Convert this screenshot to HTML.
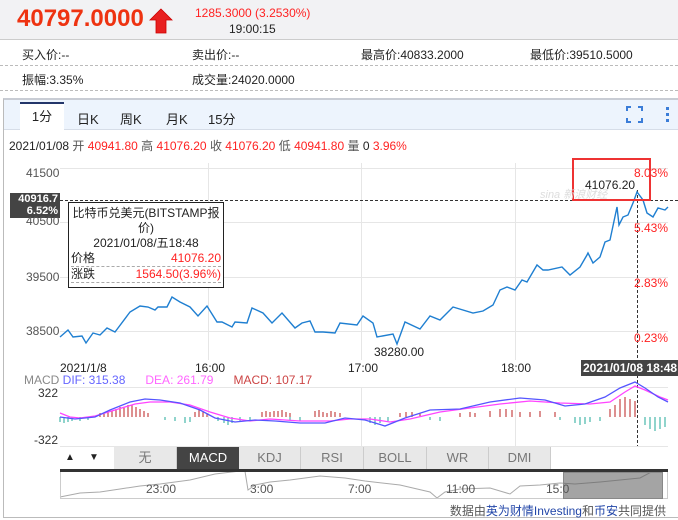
<!DOCTYPE html><html><head><meta charset="utf-8"><style>
*{margin:0;padding:0;box-sizing:border-box}
body{width:678px;height:520px;background:#fff;font-family:"Liberation Sans","Noto Sans CJK SC",sans-serif;font-size:12px;color:#222;position:relative;overflow:hidden}
.a{position:absolute;white-space:nowrap}
.r{color:#f22}
</style></head><body>
<div class="a" style="left:0;top:0;width:678px;height:40px;background:#f2f2f4;border-bottom:1px solid #ccc"></div>
<div class="a" style="left:17px;top:5px;font-size:24px;font-weight:bold;color:#e31;">40797.0000</div>
<svg class="a" style="left:149px;top:8px" width="24" height="26"><polygon points="12,1 23,12 17,12 17,25 7,25 7,12 1,12" fill="#e82020" stroke="#c00" stroke-width="0.8"/></svg>
<div class="a r" style="left:195px;top:6px;font-size:12px">1285.3000 (3.2530%)</div>
<div class="a" style="left:229px;top:22px;font-size:12px">19:00:15</div>
<div class="a" style="left:22px;top:46px">买入价:--</div>
<div class="a" style="left:192px;top:46px">卖出价:--</div>
<div class="a" style="left:361px;top:46px">最高价:40833.2000</div>
<div class="a" style="left:530px;top:46px">最低价:39510.5000</div>
<div class="a" style="left:0;top:65px;width:678px;border-top:1px dashed #bbb"></div>
<div class="a" style="left:22px;top:71px">振幅:3.35%</div>
<div class="a" style="left:192px;top:71px">成交量:24020.0000</div>
<div class="a" style="left:0;top:90px;width:678px;border-top:1px dashed #bbb"></div>
<div class="a" style="left:3px;top:98px;width:680px;height:420px;border:1px solid #bbb;border-top:2px solid #c8ccd4"></div>
<div class="a" style="left:4px;top:100px;width:678px;height:30px;background:#edf4fd;border-bottom:1px solid #d6dde8"></div>
<div class="a" style="left:20px;top:102px;width:44px;height:29px;background:#fff;border-top:2px solid #23366a;text-align:center;line-height:26px;font-size:13px">1分</div>
<div class="a" style="left:77px;top:109px;font-size:13px">日K</div>
<div class="a" style="left:120px;top:109px;font-size:13px">周K</div>
<div class="a" style="left:166px;top:109px;font-size:13px">月K</div>
<div class="a" style="left:208px;top:109px;font-size:13px">15分</div>
<svg class="a" style="left:626px;top:106px" width="50" height="18"><path d="M1 5V1h4M12 1h4v4M16 12v4h-4M5 16H1v-4" stroke="#3b7dd8" stroke-width="2" fill="none"/><rect x="40" y="1" width="3" height="3" fill="#3b7dd8"/><rect x="40" y="7" width="3" height="3" fill="#3b7dd8"/><rect x="40" y="13" width="3" height="3" fill="#3b7dd8"/></svg>
<div class="a" style="left:9px;top:137px">2021/01/08 <span style="color:#555">开</span> <span class="r">40941.80</span> <span style="color:#555">高</span> <span class="r">41076.20</span> <span style="color:#555">收</span> <span class="r">41076.20</span> <span style="color:#555">低</span> <span class="r">40941.80</span> <span style="color:#555">量</span> 0 <span class="r">3.96%</span></div>
<svg class="a" style="left:0;top:0" width="678" height="520">
<g stroke="#e6e6e6" stroke-width="1">
<line x1="60" y1="168.5" x2="668" y2="168.5"/><line x1="60" y1="222.5" x2="668" y2="222.5"/><line x1="60" y1="277.5" x2="668" y2="277.5"/><line x1="60" y1="331.5" x2="668" y2="331.5"/>
<line x1="208.5" y1="163" x2="208.5" y2="360"/><line x1="361.5" y1="163" x2="361.5" y2="360"/><line x1="515.5" y1="163" x2="515.5" y2="360"/>
<line x1="60" y1="387.5" x2="668" y2="387.5"/><line x1="60" y1="446.5" x2="668" y2="446.5"/>
<line x1="208.5" y1="387" x2="208.5" y2="446"/><line x1="361.5" y1="387" x2="361.5" y2="446"/><line x1="515.5" y1="387" x2="515.5" y2="446"/>
</g>
<line x1="60" y1="200.5" x2="678" y2="200.5" stroke="#333" stroke-dasharray="3,2"/>
<line x1="637.5" y1="190" x2="637.5" y2="446" stroke="#333" stroke-dasharray="3,2"/>
<polyline fill="none" stroke="#1f7fd1" stroke-width="1.4" points="60,337 68,330 73,337 82,336 86,343 93,333 100,335 107,328 115,332 130,312 140,306 148,307 155,310 158,307 167,307 172,297 180,302 190,307 198,316 207,306 217,322 222,322 232,327 235,322 247,323 252,308 263,313 272,323 282,313 295,328 302,323 310,321 315,332 323,332 335,333 340,323 357,325 363,316 373,323 377,337 393,334 397,344 405,322 420,329 430,316 440,320 453,307 473,313 483,311 493,305 500,290 507,287 515,290 522,280 527,282 537,265 543,270 548,270 562,267 570,275 580,267 587,255 588,253 593,263 600,257 605,242 610,240 617,207 619,225 623,217 628,215 633,203 637,192 643,200 647,213 653,217 658,208 665,210 668,207"/>
<g stroke="#b22" stroke-width="1"><path d="M100 417v-4M104 417v-4M108 417v-5M112 417v-6M116 417v-8M120 417v-10M124 417v-10M128 417v-12M132 417v-12M136 417v-10M140 417v-8M144 417v-6M148 417v-4M195 417v-5M199 417v-8M203 417v-6M207 417v-4M262 417v-5M266 417v-6M270 417v-5M274 417v-6M278 417v-6M282 417v-7M286 417v-5M290 417v-4M315 417v-6M319 417v-7M323 417v-5M327 417v-4M331 417v-6M335 417v-5M340 417v-4M400 417v-4M406 417v-5M412 417v-5M420 417v-4M460 417v-4M470 417v-5M475 417v-4M490 417v-6M500 417v-8M506 417v-8M512 417v-7M520 417v-5M530 417v-5M540 417v-6M555 417v-5M610 417v-8M615 417v-12M620 417v-18M625 417v-20M630 417v-18M635 417v-16"/></g>
<g stroke="#2a9" stroke-width="1"><path d="M60 417v5M64 417v6M68 417v5M72 417v4M80 417v4M88 417v3M165 417v3M175 417v4M185 417v6M190 417v5M218 417v4M224 417v6M228 417v8M232 417v6M240 417v4M250 417v3M290 417v3M300 417v4M370 417v6M375 417v8M380 417v6M388 417v4M430 417v3M440 417v4M560 417v3M575 417v6M580 417v8M585 417v7M590 417v5M600 417v4M645 417v8M650 417v12M655 417v14M660 417v12M665 417v10"/></g>
<polyline fill="none" stroke="#f4f" stroke-width="1.3" points="60,413 70,417 80,418 95,416 115,410 135,404 150,402 170,402 190,405 210,412 230,418 250,421 270,419 300,421 330,421 350,419 370,419 390,422 410,419 440,412 470,408 500,404 530,401 560,403 590,404 610,402 625,392 635,386 645,390 660,397 668,400"/>
<polyline fill="none" stroke="#55f" stroke-width="1.3" points="60,417 75,419 95,417 110,410 130,402 145,399 160,400 180,403 200,410 215,418 235,422 255,420 275,421 300,423 325,423 345,418 365,420 385,426 405,418 430,410 460,409 490,402 520,398 545,400 565,406 585,404 605,397 620,388 635,382 645,388 658,397 668,402"/>
<polyline fill="none" stroke="#aaa" stroke-width="1" points="60,497 80,493 100,492 120,489 140,486 160,484 190,480 215,474 240,471 244,465 248,490 255,485 270,482 290,480 320,476 345,478 365,481 400,485 430,492 437,498 445,492 460,489 490,488 510,494 520,486 540,485 560,483 575,484 600,482 620,480 640,478 655,470 660,472"/>
</svg>
<div class="a" style="left:10px;top:193px;width:50px;height:25px;background:#444;color:#fff;font-size:11px;font-weight:bold;text-align:right;line-height:12px;padding-right:2px">40916.7<br>6.52%</div>
<div class="a" style="left:26px;top:166px;color:#555">41500</div>
<div class="a" style="left:26px;top:214px;color:#555">40500</div>
<div class="a" style="left:26px;top:270px;color:#555">39500</div>
<div class="a" style="left:26px;top:324px;color:#555">38500</div>
<div class="a r" style="left:634px;top:166px">8.03%</div>
<div class="a r" style="left:634px;top:221px">5.43%</div>
<div class="a r" style="left:634px;top:276px">2.83%</div>
<div class="a r" style="left:634px;top:331px">0.23%</div>
<div class="a" style="left:68px;top:202px;width:156px;height:86px;background:#fff;border:1px solid #222;font-size:12px;line-height:15px">
<div style="text-align:center;padding-top:3px">比特币兑美元(BITSTAMP报<br>价)<br>2021/01/08/五18:48</div>
<div style="margin:0 2px;border-bottom:1px dashed #aaa;display:flex;justify-content:space-between"><span>价格</span><span class="r">41076.20</span></div>
<div style="margin:0 2px;border-bottom:1px dashed #aaa;display:flex;justify-content:space-between"><span>涨跌</span><span class="r">1564.50(3.96%)</span></div>
</div>
<div class="a" style="left:572px;top:158px;width:79px;height:43px;border:2px solid #e33"></div>
<div class="a" style="left:585px;top:178px">41076.20</div>
<div class="a" style="left:540px;top:186px;color:#ddd;font-size:11px;font-style:italic">sina 新浪财经</div>
<div class="a" style="left:374px;top:345px">38280.00</div>
<div class="a" style="left:60px;top:361px">2021/1/8</div>
<div class="a" style="left:195px;top:361px">16:00</div>
<div class="a" style="left:348px;top:361px">17:00</div>
<div class="a" style="left:501px;top:361px">18:00</div>
<div class="a" style="left:581px;top:360px;width:97px;height:16px;background:#444;color:#fff;font-weight:bold;line-height:16px;padding-left:2px">2021/01/08 18:48</div>
<div class="a" style="left:24px;top:373px;color:#888">MACD <span style="color:#66f">DIF: 315.38</span>&nbsp;&nbsp;&nbsp;&nbsp;&nbsp; <span style="color:#f6f">DEA: 261.79</span>&nbsp;&nbsp;&nbsp;&nbsp;&nbsp; <span style="color:#c44">MACD: 107.17</span></div>
<div class="a" style="left:38px;top:386px;color:#333">322</div>
<div class="a" style="left:34px;top:433px;color:#333">-322</div>
<div class="a" style="left:60px;top:447px;width:20px;height:22px;text-align:center;line-height:22px;font-size:10px">▲</div>
<div class="a" style="left:84px;top:447px;width:20px;height:22px;text-align:center;line-height:22px;font-size:10px">▼</div>
<div class="a" style="left:114px;top:447px;display:flex;height:22px;background:#e8e8e8;font-size:13px;color:#777">
<div style="width:63px;text-align:center;line-height:22px;border-right:1px solid #ccc">无</div>
<div style="width:62px;text-align:center;line-height:22px;background:#444;color:#fff">MACD</div>
<div style="width:62px;text-align:center;line-height:22px;border-right:1px solid #ccc">KDJ</div>
<div style="width:63px;text-align:center;line-height:22px;border-right:1px solid #ccc">RSI</div>
<div style="width:63px;text-align:center;line-height:22px;border-right:1px solid #ccc">BOLL</div>
<div style="width:62px;text-align:center;line-height:22px;border-right:1px solid #ccc">WR</div>
<div style="width:62px;text-align:center;line-height:22px;border-right:1px solid #ccc">DMI</div>
</div>
<div class="a" style="left:60px;top:469px;width:608px;height:3px;background:#333"></div>
<div class="a" style="left:60px;top:472px;width:608px;height:27px;border:1px solid #ccc;border-top:none"></div>
<div class="a" style="left:563px;top:472px;width:100px;height:27px;background:rgba(90,90,90,.55);border:1px solid #888"></div>
<div class="a" style="left:146px;top:482px;color:#555">23:00</div>
<div class="a" style="left:250px;top:482px;color:#555">3:00</div>
<div class="a" style="left:348px;top:482px;color:#555">7:00</div>
<div class="a" style="left:446px;top:482px;color:#555">11:00</div>
<div class="a" style="left:546px;top:482px;color:#555">15:0</div>
<div class="a" style="right:12px;top:502px;color:#555">数据由<span style="color:#2246a8">英为财情Investing</span>和<span style="color:#2246a8">币安</span>共同提供</div>
</body></html>
